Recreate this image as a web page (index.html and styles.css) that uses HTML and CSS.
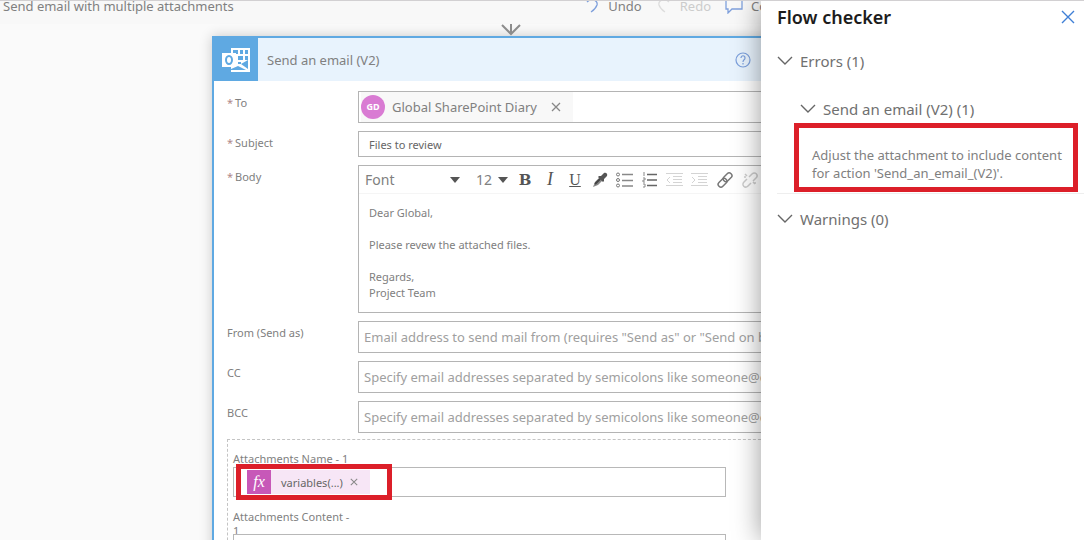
FILE: index.html
```html
<!DOCTYPE html>
<html lang="en">
<head>
<meta charset="utf-8">
<title>Send email with multiple attachments</title>
<link rel="stylesheet" href="styles.css">
</head>
<body>
<div class="app">
  <main class="canvas">
    <header class="topbar">
      <span class="flow-name">Send email with multiple attachments</span>
      <button class="command"><svg width="16" height="16" viewBox="0 0 16 16"><path d="M3 4c5-5 11-1 10 3-1 3-3 5-6 7" class="blue-line"/></svg>Undo</button>
      <button class="command redo" disabled><svg width="16" height="16" viewBox="0 0 16 16"><path d="M13 4C8-1 2 3 3 7c1 3 3 5 6 7" class="gray-line"/></svg>Redo</button>
      <button class="command comments"><svg width="18" height="16" viewBox="0 0 18 16"><path d="M1 1h16v10H7l-4 4v-4H1z" class="blue-line"/></svg>Comments</button>
    </header>
    <svg class="connector" width="20" height="12" viewBox="0 0 20 12"><path d="M10 0v10M1 1l9 9 9-9"/></svg>
    <section class="card">
      <div class="card-head">
        <div class="card-icon"><svg width="28" height="26" viewBox="0 0 28 26"><path d="M9 1h19v24H9z" fill="#fff"/><path d="M11 3h5v4h-5zM18 3h3v4h-3zM23 3h3v4h-3zM16 9h5v4h-5zM23 9h3v4h-3zM16 15h3v2h-3zM9 22l7-3 8 4H9zM19 17l7-4v9z" fill="#5fa9e2"/><rect x="0" y="6" width="14" height="14" fill="#fff"/><ellipse cx="7" cy="13" rx="3" ry="4" fill="none" stroke="#5fa9e2" stroke-width="2"/></svg></div>
        <h2 class="card-title">Send an email (V2)</h2>
        <button class="help" aria-label="Help"><svg width="16" height="16" viewBox="0 0 16 16"><circle cx="8" cy="8" r="7"/><path d="M6 6c0-3 4-3 4 0 0 2-2 1.500-2 4M8 11v1.500"/></svg></button>
      </div>
      <form class="fields">
        <div class="row">
          <label for="to"><i>*</i>To</label>
          <div class="box people">
            <span class="person"><b class="avatar">GD</b>Global SharePoint Diary<button type="button" class="remove" aria-label="Remove Global SharePoint Diary"><svg width="10" height="10" viewBox="0 0 10 10"><path d="M1 1l8 8M9 1L1 9"/></svg></button></span>
            <input id="to" class="bare">
          </div>
        </div>
        <div class="row">
          <label for="subject"><i>*</i>Subject</label>
          <input id="subject" class="box subject" value="Files to review">
        </div>
        <div class="row">
          <label for="body"><i>*</i>Body</label>
          <div class="box editor">
            <div class="tools">
              <span class="pick font-pick"><select aria-label="Font"><option>Font</option></select><svg width="10" height="6" viewBox="0 0 10 6"><path d="M0 0h10L5 6z"/></svg></span>
              <span class="pick size-pick"><select aria-label="Font size"><option>12</option></select><svg width="10" height="6" viewBox="0 0 10 6"><path d="M0 0h10L5 6z"/></svg></span>
              <button type="button" class="tool bold">B</button>
              <button type="button" class="tool italic">I</button>
              <button type="button" class="tool underline">U</button>
              <button type="button" class="tool" aria-label="Text colour"><svg width="18" height="18" viewBox="0 0 18 18"><path d="M2 16l2-5 5-5 3 3-5 5z" fill="#888"/><path d="M8 5l2 0 3-3c2-1 4 1 3 3l-3 3v2l-1 1-5-5z" fill="#555"/><path d="M4 13l5-5" stroke="#444" stroke-width="2"/></svg></button>
              <button type="button" class="tool" aria-label="Bulleted list"><svg width="18" height="16" viewBox="0 0 18 16"><path d="M6 2.500h11M6 8.500h11M6 14h11" stroke="#888" stroke-width="1.300"/><g fill="none" stroke="#777"><circle cx="2" cy="2.500" r="1.500"/><circle cx="2" cy="8" r="1.500"/><circle cx="2" cy="13.500" r="1.500"/></g></svg></button>
              <button type="button" class="tool" aria-label="Numbered list"><svg width="16" height="16" viewBox="0 0 16 16"><path d="M5 2.500h10M5 8h10M5 13.500h10" stroke="#666" stroke-width="1.600"/><path d="M2 0v4M1 6h2v2H1v2h2M1 12h2v3H1" fill="none" stroke="#888"/></svg></button>
              <button type="button" class="tool" disabled aria-label="Outdent"><svg width="18" height="16" viewBox="0 0 18 16"><path d="M0 1.500h17M7 4.500h9M7 7.500h9M7 10.500h9M0 13.500h17M4 5L1 8l3 3" fill="none" stroke="#d4d4d4"/></svg></button>
              <button type="button" class="tool" disabled aria-label="Indent"><svg width="18" height="16" viewBox="0 0 18 16"><path d="M0 1.500h17M7 4.500h9M7 7.500h9M7 10.500h9M0 13.500h17M1 5l3 3-3 3" fill="none" stroke="#d4d4d4"/></svg></button>
              <button type="button" class="tool" aria-label="Link"><svg width="18" height="18" viewBox="0 0 18 18"><g fill="none" stroke="#777" stroke-width="1.500"><rect x="6.500" y="3.500" width="10" height="5.500" rx="2.700" transform="rotate(-45 11.500 6.200)"/><rect x="1.500" y="9" width="10" height="5.500" rx="2.700" transform="rotate(-45 6.500 11.700)"/></g></svg></button>
              <button type="button" class="tool" disabled aria-label="Unlink"><svg width="18" height="18" viewBox="0 0 18 18"><g fill="none" stroke="#ccc" stroke-width="1.500"><path d="M8 6l3-3c3-3 7 1 4 4l-3 3M10 12l-3 3c-3 3-7-1-4-4l3-3M4 3l2 2M14 13l-2-2M3 6h2M13 12h2"/></g></svg></button>
            </div>
            <textarea id="body" rows="6">Dear Global,

Please revew the attached files.

Regards,
Project Team</textarea>
          </div>
        </div>
        <div class="row">
          <label for="from">From (Send as)</label>
          <input id="from" class="box" placeholder="Email address to send mail from (requires &quot;Send as&quot; or &quot;Send on behalf of&quot;)">
        </div>
        <div class="row">
          <label for="cc">CC</label>
          <input id="cc" class="box" placeholder="Specify email addresses separated by semicolons like someone@contoso.com">
        </div>
        <div class="row">
          <label for="bcc">BCC</label>
          <input id="bcc" class="box" placeholder="Specify email addresses separated by semicolons like someone@contoso.com">
        </div>
        <div class="attachments">
          <label for="att-name">Attachments Name - 1</label>
          <div class="att-box">
            <span class="token"><em class="fx">fx</em>variables(...)<button type="button" class="remove" aria-label="Remove variables"><svg width="8" height="8" viewBox="0 0 10 10"><path d="M1 1l8 8M9 1L1 9"/></svg></button></span>
            <input id="att-name" class="bare">
            <span class="mark mark-token"></span>
          </div>
          <label for="att-content" class="content-label">Attachments Content - 1</label>
          <input id="att-content" class="att-box att-input">
        </div>
      </form>
    </section>
  </main>
  <aside class="panel">
    <div class="panel-head">
      <h1>Flow checker</h1>
      <button class="close" aria-label="Close"><svg width="14" height="14" viewBox="0 0 14 14"><path d="M1 1l12 12M13 1L1 13"/></svg></button>
    </div>
    <button class="group"><svg width="16" height="10" viewBox="0 0 16 10"><path d="M1 1l7 7 7-7"/></svg>Errors (1)</button>
    <div class="errors">
      <button class="group sub"><svg width="16" height="10" viewBox="0 0 16 10"><path d="M1 1l7 7 7-7"/></svg>Send an email (V2) (1)</button>
      <p class="message">Adjust the attachment to include content for action 'Send_an_email_(V2)'.<span class="mark mark-message"></span></p>
    </div>
    <button class="group warnings"><svg width="16" height="10" viewBox="0 0 16 10"><path d="M1 1l7 7 7-7"/></svg>Warnings (0)</button>
  </aside>
</div>
</body>
</html>
```
FILE: styles.css
```css
* { box-sizing: border-box; }

body {
  margin: 0;
  font-family: "Noto Sans", "Open Sans", sans-serif;
  font-size: 13px;
  color: #808080;
}

button, input, select, textarea {
  font: inherit;
  color: inherit;
  margin: 0;
  padding: 0;
  border: 0;
  background: none;
  outline: 0;
}

svg { display: block; flex: none; }
i, em { font-style: normal; }

.app {
  display: flex;
  height: 100vh;
  overflow: hidden;
  border-top: 1px solid #d2d0d2;
}

.canvas {
  flex: 1;
  min-width: 0;
  overflow: hidden;
  background: #fafafa;
}

.topbar {
  display: flex;
  align-items: center;
  height: 23px;
  padding: 0 0 14px 3px;
  white-space: nowrap;
  background: #f8f8f8;
}

.flow-name { flex: 1; }

.command {
  display: flex;
  align-items: center;
  gap: 8px;
  margin-right: 14px;
}

.redo { color: #ccc; }
.comments { width: 36px; margin-right: 0; overflow: hidden; }

.blue-line, .gray-line { fill: none; stroke: #7fa0dc; stroke-width: 1.3; }
.gray-line { stroke: #ddd; }

.connector {
  margin-left: 501px;
  fill: none;
  stroke: #8c8c8c;
  stroke-width: 2;
}

.card {
  margin: 0 -20px 0 212px;
  border: solid #5fa9e2;
  border-width: 2px 0 0 2px;
  background: #fff;
  box-shadow: 0 0 12px rgba(0, 0, 0, 0.2);
}

.card-head {
  display: flex;
  align-items: center;
  height: 43px;
  padding-right: 30px;
  background: #e8f3fd;
}

.card-icon {
  display: grid;
  place-items: center;
  align-self: stretch;
  width: 44px;
  background: #5fa9e2;
}

.card-title {
  flex: 1;
  margin: 0 0 0 9px;
  font-size: 13px;
  font-weight: 400;
}

.help svg { fill: none; stroke: #7b9fdc; stroke-width: 1.2; }

.fields { padding: 10px 0 0 13px; }

.row {
  display: flex;
  margin-bottom: 8px;
}

.row label {
  width: 131px;
  padding-top: 4px;
  font-size: 11px;
  line-height: 16px;
}

.row i { margin-right: 2px; color: #b08888; }

.box {
  flex: 1;
  min-width: 0;
  height: 32px;
  padding-left: 5px;
  border: 1px solid #b4b4b4;
  background: #fff;
}

.box::placeholder { color: #a0a0a0; opacity: 1; }

.people { display: flex; padding-left: 2px; }

.person {
  display: flex;
  align-items: center;
  padding-right: 12px;
  background: #f8f8f8;
}

.avatar {
  width: 24px;
  margin-right: 7px;
  border-radius: 50%;
  background: #d97bd3;
  color: #fff;
  font-size: 9px;
  line-height: 24px;
  text-align: center;
}

.remove { margin-left: 14px; }
.remove svg { fill: none; stroke: #888; stroke-width: 1.3; }

.bare { flex: 1; min-width: 0; }

.subject {
  height: 26px;
  padding-left: 10px;
  font-size: 11px;
  color: #666;
}

.editor {
  height: auto;
  padding: 0;
}

.tools {
  display: flex;
  align-items: center;
  gap: 7px;
  height: 28px;
  padding-left: 6px;
  border-bottom: 1px solid #f5f5f5;
}

.pick { display: flex; align-items: center; }
.pick select { flex: 1; appearance: none; font-size: 14px; }
.pick path { fill: #555; }
.font-pick { width: 95px; }
.size-pick { width: 32px; margin: 0 1px 0 9px; }

.tool {
  display: grid;
  place-items: center;
  width: 18px;
  flex: none;
  font-family: "DejaVu Serif", serif;
  font-size: 15px;
  color: #555;
}

.bold { font-weight: 700; }
.italic { font-family: "Liberation Serif", serif; font-size: 18px; font-style: italic; }
.underline { font-family: "Liberation Serif", serif; font-size: 16px; text-decoration: underline; }

.editor textarea {
  display: block;
  width: 100%;
  height: 118px;
  padding: 11px 10px;
  font-size: 11px;
  line-height: 16px;
  resize: none;
}

.attachments {
  margin: -2px -20px 0 0;
  padding: 11px 0 0 5px;
  border: 1px dashed #c4c4c4;
}

.attachments label {
  display: block;
  width: 124px;
  height: 16px;
  font-size: 11px;
  line-height: 16px;
  white-space: nowrap;
}

.attachments .content-label {
  height: 24px;
  margin-top: 13px;
  line-height: 14px;
  white-space: normal;
}

.att-box {
  position: relative;
  display: flex;
  width: calc(100% - 74px);
  height: 30px;
  padding-left: 13px;
  border: 1px solid #b8b8b8;
  background: #fff;
}

.att-input { background: none; }

.token {
  display: flex;
  align-items: center;
  margin: 2px 0;
  padding-right: 12px;
  background: #f7e6f6;
  font-size: 11px;
  color: #666;
}

.fx {
  width: 24px;
  margin-right: 10px;
  background: #c758b8;
  color: #fff;
  font: italic 16px/24px "Liberation Serif", serif;
  text-align: center;
}

.token .remove { margin-left: 7px; }

.mark {
  position: absolute;
  border: 5px solid #dc1f29;
  pointer-events: none;
}

.mark-token { left: 2px; top: -4px; width: 156px; height: 36px; }
.mark-message { left: -18px; top: -23px; width: 284px; height: 69px; }

.panel {
  position: relative;
  width: 323px;
  flex: none;
  padding: 4px 0 0 16px;
  background: #fff;
  box-shadow: 0 0 26px rgba(0, 0, 0, 0.4);
}

.panel-head {
  display: flex;
  justify-content: space-between;
  align-items: center;
  padding-right: 9px;
}

.panel-head h1 {
  margin: 0;
  font-size: 18px;
  font-weight: 600;
  line-height: 24px;
  color: #1c1c1c;
}

.close svg { fill: none; stroke: #3f7fd6; stroke-width: 1.4; }

.group {
  display: flex;
  align-items: center;
  gap: 7px;
  margin-top: 20px;
  font-size: 15px;
  line-height: 24px;
  color: #707070;
}

.group svg { fill: none; stroke: #666; stroke-width: 1.4; }

.errors {
  padding: 4px 0 11px 23px;
  border-bottom: 1px solid #eee;
}

.message {
  position: relative;
  width: 262px;
  margin: 25px 0 0 12px;
  font-size: 13px;
  line-height: 18px;
}

.warnings { margin-top: 13px; }
```
